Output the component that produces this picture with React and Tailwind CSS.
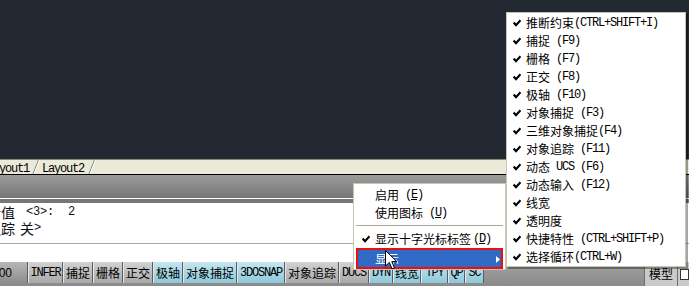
const HAN = /([\u4e00-\u9fff]+)/

function Txt({ s, cn = 'text-[12px]', ln = 'text-[12px] tracking-[-1.2px]' }) {
  return s.split(HAN).filter(Boolean).map((p, i) =>
    HAN.test(p) ? (
      <span key={i} className={`font-['Noto_Sans_CJK_SC'] ${cn}`}>{p}</span>
    ) : (
      <span key={i} className={`font-['Liberation_Mono'] ${ln}`}>{p}</span>
    )
  )
}

const Check = ({ className = '' }) => (
  <svg width="8" height="8" viewBox="0 0 8 8" className={className}>
    <path d="M0.6 3.6 L3 6.1 L7.5 1.2" fill="none" stroke="#000" strokeWidth="2.1" />
  </svg>
)

const subItems = [
  '推断约束(CTRL+SHIFT+I)',
  '捕捉 (F9)',
  '栅格 (F7)',
  '正交 (F8)',
  '极轴 (F10)',
  '对象捕捉 (F3)',
  '三维对象捕捉(F4)',
  '对象追踪 (F11)',
  '动态 UCS (F6)',
  '动态输入 (F12)',
  '线宽',
  '透明度',
  '快捷特性 (CTRL+SHIFT+P)',
  '选择循环(CTRL+W)',
]

const buttons = [
  { label: 'INFER', w: 'w-[35px]' },
  { label: '捕捉', w: 'w-[30px]' },
  { label: '栅格', w: 'w-[30px]' },
  { label: '正交', w: 'w-[30px]' },
  { label: '极轴', w: 'w-[30px]', on: true },
  { label: '对象捕捉', w: 'w-[54px]', on: true },
  { label: '3DOSNAP', w: 'w-[48px]', on: true },
  { label: '对象追踪', w: 'w-[54px]' },
  { label: 'DUCS', w: 'w-[30px]' },
  { label: 'DYN', w: 'w-[24px]', on: true },
  { label: '线宽', w: 'w-[28px]', on: true },
  { label: 'TPY', w: 'w-[27px]', on: true },
  { label: 'QP', w: 'w-[17px]', on: true },
  { label: 'SC', w: 'w-[19px]', on: true },
]

function Slant({ className = '' }) {
  return (
    <svg width="8" height="14" viewBox="0 0 8 14" className={className}>
      <line x1="6.5" y1="0" x2="1" y2="14" stroke="#7c7a70" strokeWidth="1" />
      <line x1="7.5" y1="0" x2="2" y2="14" stroke="#ffffff" strokeWidth="1" />
    </svg>
  )
}

export default function App() {
  return (
    <div className="relative w-[689px] h-[286px] overflow-hidden bg-[#222830] flex flex-col select-none">
      {/* drawing area */}
      <div className="h-[159px] shrink-0 bg-[#222830]" />

      {/* layout tabs */}
      <div className="h-[16px] shrink-0 bg-[#ebe9d8] border-t border-[#8c8674] border-b border-b-black flex items-center whitespace-pre text-black">
        <div className="ml-[-13px] leading-[14px]"><Txt s="Layout1" /></div>
        <Slant className="ml-[3px]" />
        <div className="ml-[2px] leading-[14px]"><Txt s="Layout2" /></div>
        <Slant className="ml-[4px]" />
      </div>

      {/* toolbar strip */}
      <div className="h-[23px] shrink-0 bg-gradient-to-b from-[#9c9c9c] to-[#767676]" />
      <div className="h-px shrink-0 bg-white" />
      <div className="h-[4px] shrink-0 bg-[#777777]" />

      {/* command line */}
      <div className="h-[40px] shrink-0 bg-white pt-[1px] whitespace-pre text-[#101018]">
        <div className="h-[16px] flex items-center ml-[-13px] leading-[16px]">
          <span className="font-['Noto_Sans_CJK_SC'] text-[14px]">新值</span>
          <span className="font-['Liberation_Mono'] text-[12px] tracking-[-0.2px] ml-[11px]">{'<3>:  2'}</span>
        </div>
        <div className="h-[16px] flex items-center ml-[-13px] leading-[16px]">
          <span className="font-['Noto_Sans_CJK_SC'] text-[14px]">追踪</span>
          <span className="font-['Noto_Sans_CJK_SC'] text-[14px] ml-[5px]">关</span>
          <span className="font-['Liberation_Mono'] text-[12px]">{'>'}</span>
        </div>
      </div>
      <div className="h-px shrink-0 bg-[#a9a9a9]" />
      <div className="h-[18px] shrink-0 bg-white" />

      {/* status bar */}
      <div className="h-[24px] shrink-0 flex bg-gradient-to-b from-[#a2a2a2] to-[#8a8a8a] whitespace-pre">
        <div className="w-[28px] h-[21px] flex items-center border-r border-[#5c5c5c] bg-gradient-to-b from-[#b8b8b8] to-[#8c8c8c] overflow-hidden">
          <span className="font-['Liberation_Sans'] text-[12px] ml-[-8px] text-black">000</span>
        </div>
        {buttons.map((b) => (
          <div
            key={b.label}
            className={`${b.w} h-[21px] flex items-center justify-center border-r border-[#5c5c5c] border-l border-l-[#e6e6e6] text-black leading-[14px] ${
              b.on ? 'bg-gradient-to-b from-[#c4e6f0] to-[#8ec8da]' : 'bg-gradient-to-b from-[#d2d2d2] to-[#a9a9a9]'
            }`}
          >
            <Txt s={b.label} />
          </div>
        ))}
        <div className="flex-1" />
        <div className="w-[33px] h-[24px] flex items-center justify-center bg-[#cacaca] border-l border-[#707070] text-black leading-[14px]">
          <Txt s="模型" />
        </div>
        <div className="w-[12px] h-[24px] bg-[#cacaca] border-l border-[#707070] flex items-center pl-[2px]">
          <div className="w-[10px] h-[11px] border border-[#333] bg-white" />
        </div>
      </div>

      {/* context menu */}
      <div className="absolute left-[353px] top-[183px] w-[153px] h-[87px] bg-white border border-[#c9c5b4] pt-[2px] text-black whitespace-pre">
        <div className="h-[18px] flex items-center pl-[21px] leading-[14px]">
          <Txt s="启用 " />
          <span className="font-['Liberation_Mono'] text-[12px] tracking-[-1.2px]">(<u>E</u>)</span>
        </div>
        <div className="h-[18px] flex items-center pl-[21px] leading-[14px]">
          <Txt s="使用图标 " />
          <span className="font-['Liberation_Mono'] text-[12px] tracking-[-1.2px]">(<u>U</u>)</span>
        </div>
        <div className="h-[8px] flex items-center px-[2px]">
          <div className="w-full h-[2px] border-t border-[#aca899] border-b border-b-white" />
        </div>
        <div className="h-[18px] flex items-center leading-[14px]">
          <Check className="ml-[8px] mr-[5px]" />
          <Txt s="显示十字光标标签" />
          <span className="font-['Liberation_Mono'] text-[12px] tracking-[-1.2px] ml-[2px]">(<u>D</u>)</span>
        </div>
        <div className="mx-[2px] h-[21px] border-2 border-[#e81010] bg-[#316ac5] flex items-center pl-[17px] text-white leading-[14px] relative">
          <Txt s="显示" />
          <svg width="4" height="7" viewBox="0 0 4 7" className="absolute right-[1px] top-[6px]">
            <path d="M0 0 L4 3.5 L0 7 Z" fill="#fff" />
          </svg>
        </div>
      </div>

      {/* submenu */}
      <div className="absolute left-[506px] top-[12px] w-[180px] h-[255px] bg-white border border-[#c9c5b4] pt-[1px] shadow-[2px_2px_0_rgba(0,0,0,0.35)] text-black whitespace-pre">
        {subItems.map((s) => (
          <div key={s} className="h-[18px] flex items-center leading-[14px]">
            <Check className="ml-[6px] mr-[5px]" />
            <Txt s={s} />
          </div>
        ))}
      </div>

      {/* mouse pointer */}
      <svg width="13" height="20" viewBox="0 0 13 20" className="absolute left-[385px] top-[250px]">
        <path d="M0.5 0.5 L0.5 16 L4.3 12.4 L7 18.8 L9.4 17.8 L6.8 11.6 L11.8 11.6 Z" fill="#fff" stroke="#000" strokeWidth="1" strokeLinejoin="miter" />
      </svg>
    </div>
  )
}
